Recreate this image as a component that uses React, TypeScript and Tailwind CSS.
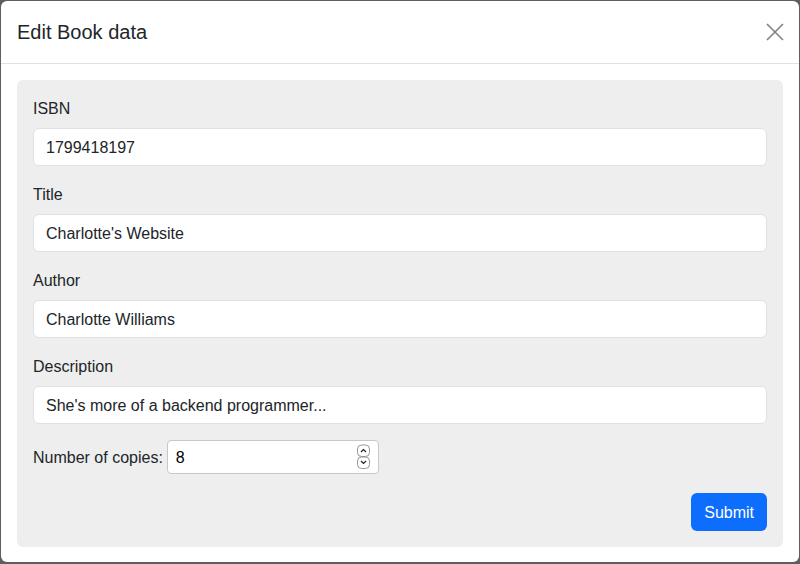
import React from "react";

const inputCls =
  "block w-full h-[38px] px-3 pt-px bg-white border border-[#dee2e6] rounded-md text-[16px] text-[#212529] outline-none";

function Field({ label, value }: { label: string; value: string }) {
  return (
    <div className="mb-4">
      <label className="block pt-px mb-[7px] text-[16px] leading-6 text-[#212529]">{label}</label>
      <input className={inputCls} defaultValue={value} />
    </div>
  );
}

function Spinner() {
  return (
    <svg width="15" height="27" viewBox="0 0 15 27" className="shrink-0">
      <rect x="1.5" y="1" width="12" height="11.5" rx="4" fill="white" stroke="#8a8a8a" strokeWidth="0.9" />
      <rect x="1.5" y="13" width="12" height="11.5" rx="4" fill="white" stroke="#8a8a8a" strokeWidth="0.9" />
      <path d="M5 8L7.5 5.5L10 8" stroke="#222" strokeWidth="1.2" fill="none" />
      <path d="M5 17L7.5 19.5L10 17" stroke="#222" strokeWidth="1.2" fill="none" />
    </svg>
  );
}

export default function App() {
  return (
    <div
      className="w-[800px] h-[564px] bg-[#5e5e5e] pt-px pl-px overflow-hidden"
      style={{ fontFamily: '"Liberation Sans", Arial, sans-serif' }}
    >
      <div className="w-[798px] h-[561px] bg-white rounded-md flex flex-col">
        <div className="h-[63px] shrink-0 flex items-center justify-between pl-4 pr-[15px] border-b border-[#dee2e6]">
          <h1 className="text-[20px] leading-[30px] text-[#212529]">Edit Book data</h1>
          <button className="w-[18px] h-[18px] flex items-center justify-center">
            <svg width="18" height="18" viewBox="0 0 18 18">
              <path d="M1 1L17 17M17 1L1 17" stroke="#808080" strokeWidth="1.6" fill="none" />
            </svg>
          </button>
        </div>
        <div className="p-4">
          <div className="bg-[#eeeeee] rounded-md p-4">
            <Field label="ISBN" value="1799418197" />
            <Field label="Title" value="Charlotte's Website" />
            <Field label="Author" value="Charlotte Williams" />
            <Field label="Description" value="She's more of a backend programmer..." />
            <div className="flex items-center h-[34px] text-[16px] text-[#212529]">
              <label className="pt-px">Number of copies:</label>
              <div className="ml-1 w-[212px] h-[34px] bg-white border border-[#c8c8c8] rounded flex items-center pl-2 pr-[7px]">
                <input
                  type="text"
                  defaultValue="8"
                  className="flex-1 min-w-0 pt-px bg-transparent text-[16px] text-black outline-none"
                />
                <Spinner />
              </div>
            </div>
            <div className="flex justify-end mt-[19px]">
              <button className="h-[38px] px-[13px] pt-px bg-[#0d6efd] text-white rounded-md text-[16px]">Submit</button>
            </div>
          </div>
        </div>
      </div>
    </div>
  );
}
